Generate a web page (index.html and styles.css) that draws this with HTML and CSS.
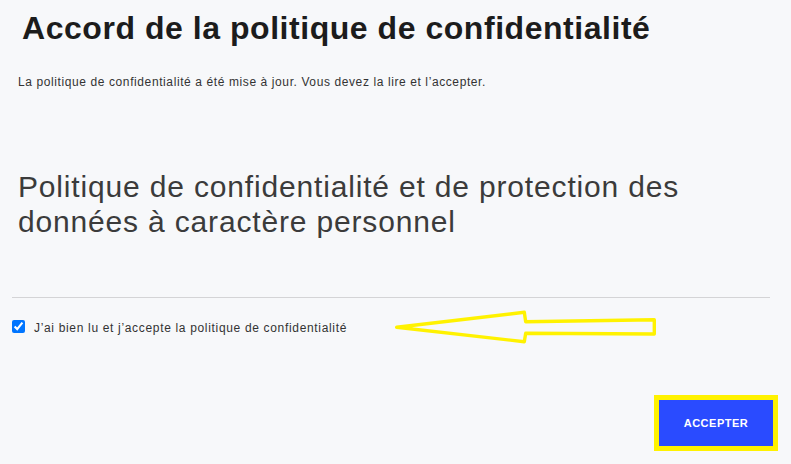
FILE: index.html
```html
<!DOCTYPE html>
<html lang="fr">
<head>
    <meta charset="UTF-8">
    <meta name="viewport" content="width=device-width, initial-scale=1.0">
    <title>Accord de la politique de confidentialité</title>
    <link rel="stylesheet" href="styles.css">
</head>
<body>
    <main class="page">
        <h1 class="title">Accord de la politique de confidentialité</h1>
        <p class="notice">La politique de confidentialité a été mise à jour. Vous devez la lire et l’accepter.</p>

        <h2 class="policy-heading">Politique de confidentialité et de protection des données à caractère personnel</h2>

        <hr class="divider">

        <div class="consent">
            <input type="checkbox" id="agree" checked>
            <label for="agree">J’ai bien lu et j’accepte la politique de confidentialité</label>
            <!-- flèche d'annotation -->
            <svg class="arrow" width="264" height="36" viewBox="0 0 264 36">
                <polygon points="2.7,17.3 130.3,2.3 131.7,11.7 260.3,9.7 260.3,24 131.7,23.3 130.3,31.7"
                         fill="none" stroke="#fff200" stroke-width="3.4" stroke-linejoin="round"/>
            </svg>
        </div>

        <div class="actions">
            <button type="button" class="accept">ACCEPTER</button>
        </div>
    </main>
</body>
</html>
```

FILE: styles.css
```css
body {
    font-family: "Liberation Sans", Arial, sans-serif;
    background-color: #f7f8fa;
    margin: 0;
    padding: 0;
}

.page {
    padding: 0 13px 0 12px;
}

.title {
    font-size: 32px;
    line-height: 36px;
    font-weight: bold;
    letter-spacing: 0.54px;
    color: #1c1c1c;
    margin: 10px 0 0 10px;
}

.notice {
    font-size: 12px;
    line-height: 14px;
    letter-spacing: 0.6px;
    color: #333;
    margin: 29px 0 0 6px;
}

.policy-heading {
    font-size: 30px;
    line-height: 34.5px;
    font-weight: normal;
    letter-spacing: 0.83px;
    color: #3b3b3b;
    margin: 81px 0 0 6px;
    max-width: 700px;
}

.divider {
    border: none;
    border-top: 1px solid #d4d4d6;
    margin: 58px 8px 0 0;
}

.consent {
    position: relative;
    display: flex;
    align-items: flex-start;
    margin-top: 22px;
}

.consent input {
    width: 13px;
    height: 13px;
    margin: 0;
    accent-color: #0075ff;
}

.consent label {
    font-size: 12px;
    line-height: 14px;
    letter-spacing: 0.67px;
    color: #333;
    margin: 1px 0 0 9px;
}

.arrow {
    position: absolute;
    left: 382px;
    top: -10px;
}

.actions {
    display: flex;
    justify-content: flex-end;
    margin-top: 60px;
}

.accept {
    width: 124px;
    height: 56px;
    box-sizing: border-box;
    border: 5px solid #fff200;
    background-color: #2a4bff;
    color: white;
    font-family: "Liberation Sans", Arial, sans-serif;
    font-size: 11px;
    font-weight: bold;
    letter-spacing: 0.5px;
    cursor: pointer;
}
```
